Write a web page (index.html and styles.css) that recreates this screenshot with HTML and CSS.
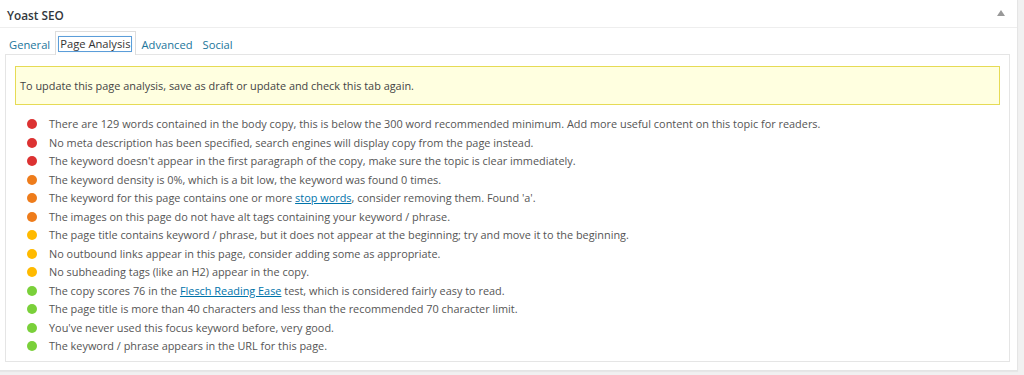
FILE: index.html
```html
<!DOCTYPE html>
<html>
<head>
<meta charset="utf-8">
<link rel="stylesheet" href="styles.css">
</head>
<body>
<div class="postbox">
  <div class="hndle">
    <span class="title">Yoast SEO</span>
    <span class="toggle"></span>
  </div>
  <div class="inside">
    <ul class="tabs">
      <li class="tab">General</li>
      <li class="tab active"><span class="focus">Page Analysis</span></li>
      <li class="tab">Advanced</li>
      <li class="tab">Social</li>
    </ul>
    <div class="panel">
      <div class="notice">To update this page analysis, save as draft or update and check this tab again.</div>
      <ul class="results">
        <li><span class="dot red"></span>There are 129 words contained in the body copy, this is below the 300 word recommended minimum. Add more useful content on this topic for readers.</li>
        <li><span class="dot red"></span>No meta description has been specified, search engines will display copy from the page instead.</li>
        <li><span class="dot red"></span>The keyword doesn't appear in the first paragraph of the copy, make sure the topic is clear immediately.</li>
        <li><span class="dot orange"></span>The keyword density is 0%, which is a bit low, the keyword was found 0 times.</li>
        <li><span class="dot orange"></span>The keyword for this page contains one or more <a href="#">stop words</a>, consider removing them. Found 'a'.</li>
        <li><span class="dot orange"></span>The images on this page do not have alt tags containing your keyword / phrase.</li>
        <li><span class="dot yellow"></span>The page title contains keyword / phrase, but it does not appear at the beginning; try and move it to the beginning.</li>
        <li><span class="dot yellow"></span>No outbound links appear in this page, consider adding some as appropriate.</li>
        <li><span class="dot yellow"></span>No subheading tags (like an H2) appear in the copy.</li>
        <li><span class="dot green"></span>The copy scores 76 in the <a href="#">Flesch Reading Ease</a> test, which is considered fairly easy to read.</li>
        <li><span class="dot green"></span>The page title is more than 40 characters and less than the recommended 70 character limit.</li>
        <li><span class="dot green"></span>You've never used this focus keyword before, very good.</li>
        <li><span class="dot green"></span>The keyword / phrase appears in the URL for this page.</li>
      </ul>
    </div>
  </div>
</div>
</body>
</html>
```

FILE: styles.css
```css
html, body {
  margin: 0;
  padding: 0;
}
body {
  background: #f1f1f1;
  font-family: "Open Sans", "Noto Sans", sans-serif;
  color: #555;
  width: 1024px;
  height: 375px;
  overflow: hidden;
}
.postbox {
  width: 1018px;
  height: 371px;
  background: #fff;
  border: 1px solid #e5e5e5;
  border-left: none;
  border-top: none;
  box-sizing: border-box;
  box-shadow: 0 1px 1px rgba(0,0,0,0.04);
}
.hndle {
  height: 28px;
  border-bottom: 1px solid #eee;
  box-sizing: border-box;
  display: flex;
  align-items: center;
  justify-content: space-between;
  padding: 2px 12px 0 7px;
}
.title {
  font-size: 11.8px;
  font-weight: 600;
  color: #32373c;
}
.toggle {
  width: 0;
  height: 0;
  border-left: 4px solid transparent;
  border-right: 4px solid transparent;
  border-bottom: 6px solid #999;
  margin-top: -4px;
}
.inside {
  padding: 4px 0 0 0;
}
.tabs {
  list-style: none;
  margin: 0;
  padding: 0 0 0 4px;
  display: flex;
  align-items: flex-end;
  height: 23px;
  position: relative;
  z-index: 1;
}
.tab {
  font-size: 11.2px;
  color: #21759b;
  padding: 0 4px;
  height: 22px;
  line-height: 23px;
  border: 1px solid transparent;
  border-bottom: none;
}
.tab.active {
  border-color: #ddd;
  background: #fff;
  height: 23px;
  padding: 0 4px 0 3px;
  color: #333;
}
.focus {
  display: inline-block;
  line-height: 14px;
  padding: 0 1px;
  outline: 1px solid #5b9dd9;
  box-shadow: 0 0 2px rgba(30,140,190,0.5);
  margin-top: 5px;
  vertical-align: top;
}
.panel {
  margin: -1px 7px 0 5px;
  border: 1px solid #e5e5e5;
  height: 308px;
  box-sizing: border-box;
  padding: 11px 9px 0 9px;
}
.notice {
  background: #ffffe0;
  border: 1px solid #e6db55;
  height: 39px;
  box-sizing: border-box;
  padding: 0 4px;
  display: flex;
  align-items: center;
  font-size: 10.9px;
  color: #444;
}
.results {
  list-style: none;
  margin: 0;
  padding: 10px 0 0 12px;
}
.results li {
  font-size: 10.9px;
  line-height: 18.5px;
  color: #555;
  white-space: nowrap;
}
.results a {
  color: #0073aa;
  text-decoration: underline;
}
.dot {
  display: inline-block;
  width: 10px;
  height: 10px;
  border-radius: 50%;
  margin-right: 12px;
  vertical-align: -1px;
}
.red { background: #dc3232; }
.orange { background: #ee7c1b; }
.yellow { background: #ffba00; }
.green { background: #7ad03a; }
```
